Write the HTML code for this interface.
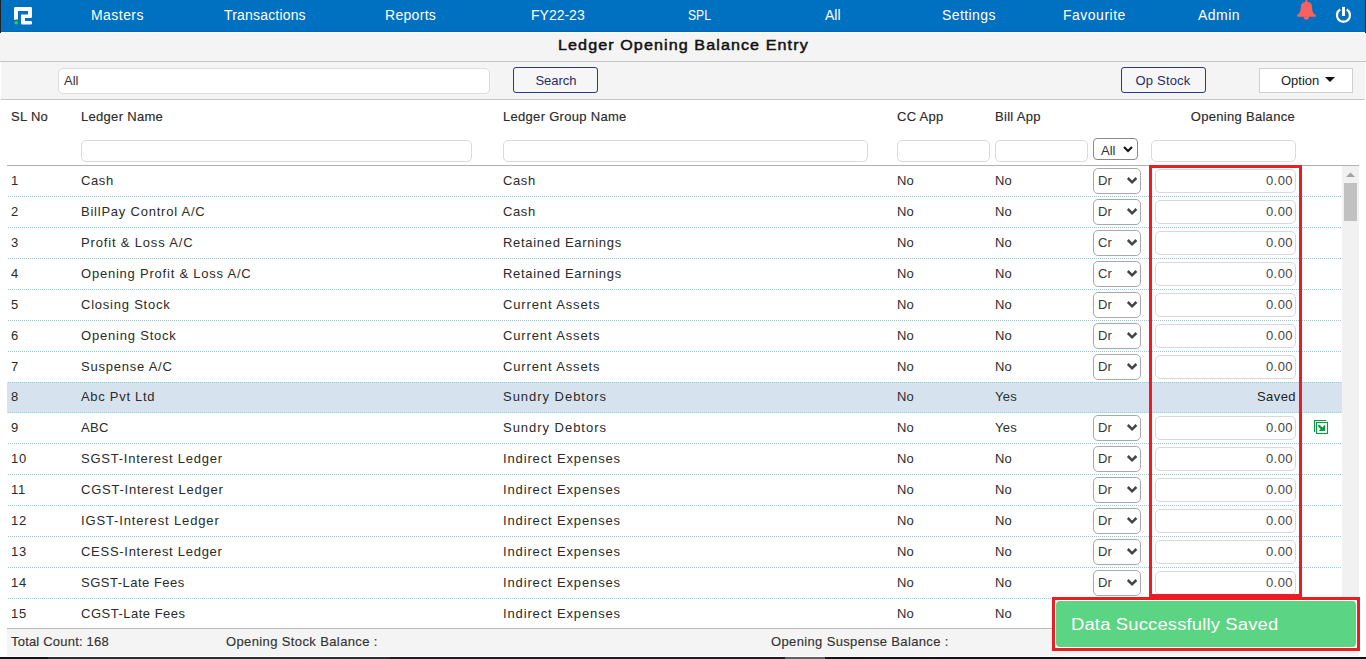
<!DOCTYPE html>
<html><head><meta charset="utf-8"><title>Ledger Opening Balance Entry</title>
<style>
html,body{margin:0;padding:0;}
body{width:1366px;height:659px;position:relative;overflow:hidden;background:#fff;font-family:'Liberation Sans', sans-serif;}
</style></head><body>
<div style="position:absolute;left:0px;top:0px;width:1366px;height:32px;background:#0070c0;"></div>
<div style="position:absolute;left:0px;top:31px;width:1366px;height:1px;background:#0068b8;"></div>
<div style="position:absolute;left:0px;top:0px;width:1px;height:33px;background:#222;"></div>
<div style="position:absolute;left:1365px;top:0px;width:1px;height:33px;background:#222;"></div>
<div style="position:absolute;left:1px;top:32px;width:1364px;height:1px;background:#fff;"></div>
<svg style="position:absolute;left:0;top:0" width="40" height="32" viewBox="0 0 40 32">
<path d="M15.2 7 H30.8 Q32 7 32 8.2 V16.8 Q32 18 30.8 18 H25 V21 H30.8 Q32 21 32 22.2 V23.3 Q32 24.5 30.8 24.5 H22.2 Q21 24.5 21 23.3 V14.6 H28 V11 H18 V19.8 L17 19.3 L16 19.8 L14 19.8 V8.2 Q14 7 15.2 7 Z" fill="#fff"/>
<circle cx="16.2" cy="22.7" r="1.75" fill="#3bd13b"/>
</svg>
<div style="position:absolute;left:91px;top:5px;font-size:14px;line-height:20px;color:#fff;white-space:nowrap;letter-spacing:0.45px;">Masters</div>
<div style="position:absolute;left:224px;top:5px;font-size:14px;line-height:20px;color:#fff;white-space:nowrap;letter-spacing:0.18px;">Transactions</div>
<div style="position:absolute;left:385px;top:5px;font-size:14px;line-height:20px;color:#fff;white-space:nowrap;letter-spacing:0.30px;">Reports</div>
<div style="position:absolute;left:531px;top:5px;font-size:14px;line-height:20px;color:#fff;white-space:nowrap;letter-spacing:0.00px;">FY22-23</div>
<div style="position:absolute;left:688px;top:5px;font-size:14px;line-height:20px;color:#fff;white-space:nowrap;letter-spacing:0.00px;transform:scaleX(0.87);transform-origin:0 0;">SPL</div>
<div style="position:absolute;left:825px;top:5px;font-size:14px;line-height:20px;color:#fff;white-space:nowrap;letter-spacing:0.00px;">All</div>
<div style="position:absolute;left:942px;top:5px;font-size:14px;line-height:20px;color:#fff;white-space:nowrap;letter-spacing:0.40px;">Settings</div>
<div style="position:absolute;left:1063px;top:5px;font-size:14px;line-height:20px;color:#fff;white-space:nowrap;letter-spacing:0.50px;">Favourite</div>
<div style="position:absolute;left:1198px;top:5px;font-size:14px;line-height:20px;color:#fff;white-space:nowrap;letter-spacing:0.45px;">Admin</div>
<svg style="position:absolute;left:1290px;top:0px" width="32" height="24" viewBox="0 0 32 24">
<rect x="15.5" y="0" width="1.9" height="3" fill="#f96060"/>
<path d="M16.4 1.9 C19.8 1.9 21.6 2.4 21.9 6 L22.4 10.8 C22.8 12.8 23.8 14 25.7 14.8 V16.75 H7.1 V14.8 C9 14 10 12.8 10.4 10.8 L10.9 7 C11.2 2.4 13 1.9 16.4 1.9 Z" fill="#f96060"/>
<path d="M13.6 16.5 H19.1 C19.1 18.6 17.9 19.85 16.35 19.85 C14.8 19.85 13.6 18.6 13.6 16.5 Z" fill="#f96060"/>
</svg>
<svg style="position:absolute;left:1330px;top:0px" width="28" height="28" viewBox="0 0 28 28">
<path d="M10.2 9.62 A6.5 6.5 0 1 0 16.7 9.62" fill="none" stroke="#fff" stroke-width="2.3"/>
<rect x="12" y="6.9" width="3" height="9.1" fill="#fff"/>
</svg>
<div style="position:absolute;left:0px;top:33px;width:1366px;height:28px;background:#f4f4f4;"></div>
<div style="position:absolute;left:0px;top:61px;width:1366px;height:1px;background:#c6c6c6;"></div>
<div style="position:absolute;left:558px;top:35px;font-size:14px;line-height:20px;color:#111;white-space:nowrap;font-weight:normal;-webkit-text-stroke:0.45px #111;letter-spacing:0.95px;transform:scaleX(1.15);transform-origin:0 0;">Ledger Opening Balance Entry</div>
<div style="position:absolute;left:1px;top:62px;width:1364px;height:37px;background:#f4f4f4;"></div>
<div style="position:absolute;left:1px;top:99px;width:1364px;height:1px;background:#c6c6c6;"></div>
<div style="position:absolute;left:58px;top:68px;width:432px;height:26px;box-sizing:border-box;background:#fff;border:1px solid #dcdcdc;border-radius:5px;"></div>
<div style="position:absolute;left:64px;top:71px;font-size:13px;line-height:20px;color:#333;white-space:nowrap;">All</div>
<div style="position:absolute;left:513px;top:67px;width:85px;height:26px;box-sizing:border-box;background:#f6f6f6;border:1px solid #263b80;border-radius:3px;"></div>
<div style="position:absolute;left:513px;width:86px;top:71px;font-size:13px;line-height:20px;color:#1f2c68;white-space:nowrap;text-align:center;">Search</div>
<div style="position:absolute;left:1121px;top:67px;width:85px;height:26px;box-sizing:border-box;background:#f6f6f6;border:1px solid #263b80;border-radius:3px;"></div>
<div style="position:absolute;left:1120px;width:86px;top:71px;font-size:13px;line-height:20px;color:#1f2c68;white-space:nowrap;text-align:center;letter-spacing:0.2px;">Op Stock</div>
<div style="position:absolute;left:1259px;top:68px;width:94px;height:25px;box-sizing:border-box;background:#fff;border:1px solid #cfcfcf;"></div>
<div style="position:absolute;left:1281px;top:71px;font-size:13px;line-height:20px;color:#222;white-space:nowrap;">Option</div>
<svg style="position:absolute;left:1325px;top:77px" width="10" height="5" viewBox="0 0 10 5"><path d="M0 0 H10 L5 5 Z" fill="#111"/></svg>
<div style="position:absolute;left:11px;top:107px;font-size:13px;line-height:20px;color:#2a2a2a;white-space:nowrap;letter-spacing:0.3px;-webkit-text-stroke:0.15px #2a2a2a;">SL No</div>
<div style="position:absolute;left:81px;top:107px;font-size:13px;line-height:20px;color:#2a2a2a;white-space:nowrap;letter-spacing:0.3px;-webkit-text-stroke:0.15px #2a2a2a;">Ledger Name</div>
<div style="position:absolute;left:503px;top:107px;font-size:13px;line-height:20px;color:#2a2a2a;white-space:nowrap;letter-spacing:0.3px;-webkit-text-stroke:0.15px #2a2a2a;">Ledger Group Name</div>
<div style="position:absolute;left:897px;top:107px;font-size:13px;line-height:20px;color:#2a2a2a;white-space:nowrap;letter-spacing:0.3px;-webkit-text-stroke:0.15px #2a2a2a;">CC App</div>
<div style="position:absolute;left:995px;top:107px;font-size:13px;line-height:20px;color:#2a2a2a;white-space:nowrap;letter-spacing:0.3px;-webkit-text-stroke:0.15px #2a2a2a;">Bill App</div>
<div style="position:absolute;right:71px;top:107px;font-size:13px;line-height:20px;color:#2a2a2a;white-space:nowrap;text-align:right;letter-spacing:0.3px;-webkit-text-stroke:0.15px #2a2a2a;">Opening Balance</div>
<div style="position:absolute;left:81px;top:140px;width:391px;height:22px;box-sizing:border-box;background:#fff;border:1px solid #dadada;border-radius:5px;"></div>
<div style="position:absolute;left:503px;top:140px;width:365px;height:22px;box-sizing:border-box;background:#fff;border:1px solid #dadada;border-radius:5px;"></div>
<div style="position:absolute;left:897px;top:140px;width:93px;height:22px;box-sizing:border-box;background:#fff;border:1px solid #dadada;border-radius:5px;"></div>
<div style="position:absolute;left:995px;top:140px;width:93px;height:22px;box-sizing:border-box;background:#fff;border:1px solid #dadada;border-radius:5px;"></div>
<div style="position:absolute;left:1151px;top:140px;width:145px;height:22px;box-sizing:border-box;background:#fff;border:1px solid #dadada;border-radius:5px;"></div>
<div style="position:absolute;left:1093px;top:138px;width:45px;height:22px;box-sizing:border-box;background:#fff;border:1px solid #8a8a8a;border-radius:4px;"></div>
<div style="position:absolute;left:1101px;top:141px;font-size:13px;line-height:20px;color:#333;white-space:nowrap;">All</div>
<svg style="position:absolute;left:1123px;top:146px" width="10" height="7" viewBox="0 0 10 7"><path d="M1 1 L5 5 L9 1" fill="none" stroke="#111" stroke-width="2"/></svg>
<div style="position:absolute;left:7px;top:165px;width:1352px;height:1px;background:#b0b0b0;"></div>
<div style="position:absolute;left:7px;top:382px;width:1335px;height:31px;background:#d6e3ef;"></div>
<div style="position:absolute;left:11px;top:171px;font-size:13px;line-height:20px;color:#2a2a2a;white-space:nowrap;letter-spacing:0.75px;">1</div>
<div style="position:absolute;left:81px;top:171px;font-size:13px;line-height:20px;color:#2a2a2a;white-space:nowrap;letter-spacing:0.62px;">Cash</div>
<div style="position:absolute;left:503px;top:171px;font-size:13px;line-height:20px;color:#2a2a2a;white-space:nowrap;letter-spacing:0.62px;">Cash</div>
<div style="position:absolute;left:897px;top:171px;font-size:13px;line-height:20px;color:#2e2e2e;white-space:nowrap;letter-spacing:0.00px;">No</div>
<div style="position:absolute;left:995px;top:171px;font-size:13px;line-height:20px;color:#2e2e2e;white-space:nowrap;letter-spacing:0.00px;">No</div>
<div style="position:absolute;left:1093px;top:168px;width:48px;height:26px;box-sizing:border-box;background:#fff;border:1px solid #a8a8a8;border-radius:5px;"></div>
<div style="position:absolute;left:1098px;top:171px;font-size:13px;line-height:20px;color:#383838;white-space:nowrap;">Dr</div>
<svg style="position:absolute;left:1126px;top:176px" width="12" height="9" viewBox="0 0 12 9"><path d="M1.8 2 L6.1 6.3 L10.4 2" fill="none" stroke="#444" stroke-width="2.5"/></svg>
<div style="position:absolute;left:1155px;top:169px;width:141px;height:24px;box-sizing:border-box;background:#fff;border:1px solid #d8d8d8;border-radius:5px;"></div>
<div style="position:absolute;right:73px;top:171px;font-size:13px;line-height:20px;color:#444;white-space:nowrap;text-align:right;letter-spacing:0.45px;">0.00</div>
<div style="position:absolute;left:7px;top:196px;width:1335px;height:1px;background-image:linear-gradient(to right,#9ccad6 50%,transparent 50%);background-size:2px 1px;background-position:1px 0;"></div>
<div style="position:absolute;left:11px;top:202px;font-size:13px;line-height:20px;color:#2a2a2a;white-space:nowrap;letter-spacing:0.75px;">2</div>
<div style="position:absolute;left:81px;top:202px;font-size:13px;line-height:20px;color:#2a2a2a;white-space:nowrap;letter-spacing:0.77px;">BillPay Control A/C</div>
<div style="position:absolute;left:503px;top:202px;font-size:13px;line-height:20px;color:#2a2a2a;white-space:nowrap;letter-spacing:0.62px;">Cash</div>
<div style="position:absolute;left:897px;top:202px;font-size:13px;line-height:20px;color:#2e2e2e;white-space:nowrap;letter-spacing:0.00px;">No</div>
<div style="position:absolute;left:995px;top:202px;font-size:13px;line-height:20px;color:#2e2e2e;white-space:nowrap;letter-spacing:0.00px;">No</div>
<div style="position:absolute;left:1093px;top:199px;width:48px;height:26px;box-sizing:border-box;background:#fff;border:1px solid #a8a8a8;border-radius:5px;"></div>
<div style="position:absolute;left:1098px;top:202px;font-size:13px;line-height:20px;color:#383838;white-space:nowrap;">Dr</div>
<svg style="position:absolute;left:1126px;top:207px" width="12" height="9" viewBox="0 0 12 9"><path d="M1.8 2 L6.1 6.3 L10.4 2" fill="none" stroke="#444" stroke-width="2.5"/></svg>
<div style="position:absolute;left:1155px;top:200px;width:141px;height:24px;box-sizing:border-box;background:#fff;border:1px solid #d8d8d8;border-radius:5px;"></div>
<div style="position:absolute;right:73px;top:202px;font-size:13px;line-height:20px;color:#444;white-space:nowrap;text-align:right;letter-spacing:0.45px;">0.00</div>
<div style="position:absolute;left:7px;top:227px;width:1335px;height:1px;background-image:linear-gradient(to right,#9ccad6 50%,transparent 50%);background-size:2px 1px;background-position:1px 0;"></div>
<div style="position:absolute;left:11px;top:233px;font-size:13px;line-height:20px;color:#2a2a2a;white-space:nowrap;letter-spacing:0.75px;">3</div>
<div style="position:absolute;left:81px;top:233px;font-size:13px;line-height:20px;color:#2a2a2a;white-space:nowrap;letter-spacing:0.83px;">Profit &amp; Loss A/C</div>
<div style="position:absolute;left:503px;top:233px;font-size:13px;line-height:20px;color:#2a2a2a;white-space:nowrap;letter-spacing:0.70px;">Retained Earnings</div>
<div style="position:absolute;left:897px;top:233px;font-size:13px;line-height:20px;color:#2e2e2e;white-space:nowrap;letter-spacing:0.00px;">No</div>
<div style="position:absolute;left:995px;top:233px;font-size:13px;line-height:20px;color:#2e2e2e;white-space:nowrap;letter-spacing:0.00px;">No</div>
<div style="position:absolute;left:1093px;top:230px;width:48px;height:26px;box-sizing:border-box;background:#fff;border:1px solid #a8a8a8;border-radius:5px;"></div>
<div style="position:absolute;left:1098px;top:233px;font-size:13px;line-height:20px;color:#383838;white-space:nowrap;">Cr</div>
<svg style="position:absolute;left:1126px;top:238px" width="12" height="9" viewBox="0 0 12 9"><path d="M1.8 2 L6.1 6.3 L10.4 2" fill="none" stroke="#444" stroke-width="2.5"/></svg>
<div style="position:absolute;left:1155px;top:231px;width:141px;height:24px;box-sizing:border-box;background:#fff;border:1px solid #d8d8d8;border-radius:5px;"></div>
<div style="position:absolute;right:73px;top:233px;font-size:13px;line-height:20px;color:#444;white-space:nowrap;text-align:right;letter-spacing:0.45px;">0.00</div>
<div style="position:absolute;left:7px;top:258px;width:1335px;height:1px;background-image:linear-gradient(to right,#9ccad6 50%,transparent 50%);background-size:2px 1px;background-position:1px 0;"></div>
<div style="position:absolute;left:11px;top:264px;font-size:13px;line-height:20px;color:#2a2a2a;white-space:nowrap;letter-spacing:0.75px;">4</div>
<div style="position:absolute;left:81px;top:264px;font-size:13px;line-height:20px;color:#2a2a2a;white-space:nowrap;letter-spacing:0.78px;">Opening Profit &amp; Loss A/C</div>
<div style="position:absolute;left:503px;top:264px;font-size:13px;line-height:20px;color:#2a2a2a;white-space:nowrap;letter-spacing:0.70px;">Retained Earnings</div>
<div style="position:absolute;left:897px;top:264px;font-size:13px;line-height:20px;color:#2e2e2e;white-space:nowrap;letter-spacing:0.00px;">No</div>
<div style="position:absolute;left:995px;top:264px;font-size:13px;line-height:20px;color:#2e2e2e;white-space:nowrap;letter-spacing:0.00px;">No</div>
<div style="position:absolute;left:1093px;top:261px;width:48px;height:26px;box-sizing:border-box;background:#fff;border:1px solid #a8a8a8;border-radius:5px;"></div>
<div style="position:absolute;left:1098px;top:264px;font-size:13px;line-height:20px;color:#383838;white-space:nowrap;">Cr</div>
<svg style="position:absolute;left:1126px;top:269px" width="12" height="9" viewBox="0 0 12 9"><path d="M1.8 2 L6.1 6.3 L10.4 2" fill="none" stroke="#444" stroke-width="2.5"/></svg>
<div style="position:absolute;left:1155px;top:262px;width:141px;height:24px;box-sizing:border-box;background:#fff;border:1px solid #d8d8d8;border-radius:5px;"></div>
<div style="position:absolute;right:73px;top:264px;font-size:13px;line-height:20px;color:#444;white-space:nowrap;text-align:right;letter-spacing:0.45px;">0.00</div>
<div style="position:absolute;left:7px;top:289px;width:1335px;height:1px;background-image:linear-gradient(to right,#9ccad6 50%,transparent 50%);background-size:2px 1px;background-position:1px 0;"></div>
<div style="position:absolute;left:11px;top:295px;font-size:13px;line-height:20px;color:#2a2a2a;white-space:nowrap;letter-spacing:0.75px;">5</div>
<div style="position:absolute;left:81px;top:295px;font-size:13px;line-height:20px;color:#2a2a2a;white-space:nowrap;letter-spacing:0.77px;">Closing Stock</div>
<div style="position:absolute;left:503px;top:295px;font-size:13px;line-height:20px;color:#2a2a2a;white-space:nowrap;letter-spacing:0.87px;">Current Assets</div>
<div style="position:absolute;left:897px;top:295px;font-size:13px;line-height:20px;color:#2e2e2e;white-space:nowrap;letter-spacing:0.00px;">No</div>
<div style="position:absolute;left:995px;top:295px;font-size:13px;line-height:20px;color:#2e2e2e;white-space:nowrap;letter-spacing:0.00px;">No</div>
<div style="position:absolute;left:1093px;top:292px;width:48px;height:26px;box-sizing:border-box;background:#fff;border:1px solid #a8a8a8;border-radius:5px;"></div>
<div style="position:absolute;left:1098px;top:295px;font-size:13px;line-height:20px;color:#383838;white-space:nowrap;">Dr</div>
<svg style="position:absolute;left:1126px;top:300px" width="12" height="9" viewBox="0 0 12 9"><path d="M1.8 2 L6.1 6.3 L10.4 2" fill="none" stroke="#444" stroke-width="2.5"/></svg>
<div style="position:absolute;left:1155px;top:293px;width:141px;height:24px;box-sizing:border-box;background:#fff;border:1px solid #d8d8d8;border-radius:5px;"></div>
<div style="position:absolute;right:73px;top:295px;font-size:13px;line-height:20px;color:#444;white-space:nowrap;text-align:right;letter-spacing:0.45px;">0.00</div>
<div style="position:absolute;left:7px;top:320px;width:1335px;height:1px;background-image:linear-gradient(to right,#9ccad6 50%,transparent 50%);background-size:2px 1px;background-position:1px 0;"></div>
<div style="position:absolute;left:11px;top:326px;font-size:13px;line-height:20px;color:#2a2a2a;white-space:nowrap;letter-spacing:0.75px;">6</div>
<div style="position:absolute;left:81px;top:326px;font-size:13px;line-height:20px;color:#2a2a2a;white-space:nowrap;letter-spacing:0.80px;">Opening Stock</div>
<div style="position:absolute;left:503px;top:326px;font-size:13px;line-height:20px;color:#2a2a2a;white-space:nowrap;letter-spacing:0.87px;">Current Assets</div>
<div style="position:absolute;left:897px;top:326px;font-size:13px;line-height:20px;color:#2e2e2e;white-space:nowrap;letter-spacing:0.00px;">No</div>
<div style="position:absolute;left:995px;top:326px;font-size:13px;line-height:20px;color:#2e2e2e;white-space:nowrap;letter-spacing:0.00px;">No</div>
<div style="position:absolute;left:1093px;top:323px;width:48px;height:26px;box-sizing:border-box;background:#fff;border:1px solid #a8a8a8;border-radius:5px;"></div>
<div style="position:absolute;left:1098px;top:326px;font-size:13px;line-height:20px;color:#383838;white-space:nowrap;">Dr</div>
<svg style="position:absolute;left:1126px;top:331px" width="12" height="9" viewBox="0 0 12 9"><path d="M1.8 2 L6.1 6.3 L10.4 2" fill="none" stroke="#444" stroke-width="2.5"/></svg>
<div style="position:absolute;left:1155px;top:324px;width:141px;height:24px;box-sizing:border-box;background:#fff;border:1px solid #d8d8d8;border-radius:5px;"></div>
<div style="position:absolute;right:73px;top:326px;font-size:13px;line-height:20px;color:#444;white-space:nowrap;text-align:right;letter-spacing:0.45px;">0.00</div>
<div style="position:absolute;left:7px;top:351px;width:1335px;height:1px;background-image:linear-gradient(to right,#9ccad6 50%,transparent 50%);background-size:2px 1px;background-position:1px 0;"></div>
<div style="position:absolute;left:11px;top:357px;font-size:13px;line-height:20px;color:#2a2a2a;white-space:nowrap;letter-spacing:0.75px;">7</div>
<div style="position:absolute;left:81px;top:357px;font-size:13px;line-height:20px;color:#2a2a2a;white-space:nowrap;letter-spacing:0.77px;">Suspense A/C</div>
<div style="position:absolute;left:503px;top:357px;font-size:13px;line-height:20px;color:#2a2a2a;white-space:nowrap;letter-spacing:0.87px;">Current Assets</div>
<div style="position:absolute;left:897px;top:357px;font-size:13px;line-height:20px;color:#2e2e2e;white-space:nowrap;letter-spacing:0.00px;">No</div>
<div style="position:absolute;left:995px;top:357px;font-size:13px;line-height:20px;color:#2e2e2e;white-space:nowrap;letter-spacing:0.00px;">No</div>
<div style="position:absolute;left:1093px;top:354px;width:48px;height:26px;box-sizing:border-box;background:#fff;border:1px solid #a8a8a8;border-radius:5px;"></div>
<div style="position:absolute;left:1098px;top:357px;font-size:13px;line-height:20px;color:#383838;white-space:nowrap;">Dr</div>
<svg style="position:absolute;left:1126px;top:362px" width="12" height="9" viewBox="0 0 12 9"><path d="M1.8 2 L6.1 6.3 L10.4 2" fill="none" stroke="#444" stroke-width="2.5"/></svg>
<div style="position:absolute;left:1155px;top:355px;width:141px;height:24px;box-sizing:border-box;background:#fff;border:1px solid #d8d8d8;border-radius:5px;"></div>
<div style="position:absolute;right:73px;top:357px;font-size:13px;line-height:20px;color:#444;white-space:nowrap;text-align:right;letter-spacing:0.45px;">0.00</div>
<div style="position:absolute;left:7px;top:382px;width:1335px;height:1px;background-image:linear-gradient(to right,#9ccad6 50%,transparent 50%);background-size:2px 1px;background-position:1px 0;"></div>
<div style="position:absolute;left:11px;top:387px;font-size:13px;line-height:20px;color:#2a2a2a;white-space:nowrap;letter-spacing:0.75px;">8</div>
<div style="position:absolute;left:81px;top:387px;font-size:13px;line-height:20px;color:#2a2a2a;white-space:nowrap;letter-spacing:0.70px;">Abc Pvt Ltd</div>
<div style="position:absolute;left:503px;top:387px;font-size:13px;line-height:20px;color:#2a2a2a;white-space:nowrap;letter-spacing:0.97px;">Sundry Debtors</div>
<div style="position:absolute;left:897px;top:387px;font-size:13px;line-height:20px;color:#2e2e2e;white-space:nowrap;letter-spacing:0.00px;">No</div>
<div style="position:absolute;left:995px;top:387px;font-size:13px;line-height:20px;color:#2e2e2e;white-space:nowrap;letter-spacing:0.30px;">Yes</div>
<div style="position:absolute;right:70px;top:387px;font-size:13px;line-height:20px;color:#222;white-space:nowrap;text-align:right;letter-spacing:0.45px;">Saved</div>
<div style="position:absolute;left:7px;top:412px;width:1335px;height:1px;background-image:linear-gradient(to right,#9ccad6 50%,transparent 50%);background-size:2px 1px;background-position:1px 0;"></div>
<div style="position:absolute;left:11px;top:418px;font-size:13px;line-height:20px;color:#2a2a2a;white-space:nowrap;letter-spacing:0.75px;">9</div>
<div style="position:absolute;left:81px;top:418px;font-size:13px;line-height:20px;color:#2a2a2a;white-space:nowrap;letter-spacing:0.35px;">ABC</div>
<div style="position:absolute;left:503px;top:418px;font-size:13px;line-height:20px;color:#2a2a2a;white-space:nowrap;letter-spacing:0.97px;">Sundry Debtors</div>
<div style="position:absolute;left:897px;top:418px;font-size:13px;line-height:20px;color:#2e2e2e;white-space:nowrap;letter-spacing:0.00px;">No</div>
<div style="position:absolute;left:995px;top:418px;font-size:13px;line-height:20px;color:#2e2e2e;white-space:nowrap;letter-spacing:0.30px;">Yes</div>
<div style="position:absolute;left:1093px;top:415px;width:48px;height:26px;box-sizing:border-box;background:#fff;border:1px solid #a8a8a8;border-radius:5px;"></div>
<div style="position:absolute;left:1098px;top:418px;font-size:13px;line-height:20px;color:#383838;white-space:nowrap;">Dr</div>
<svg style="position:absolute;left:1126px;top:423px" width="12" height="9" viewBox="0 0 12 9"><path d="M1.8 2 L6.1 6.3 L10.4 2" fill="none" stroke="#444" stroke-width="2.5"/></svg>
<div style="position:absolute;left:1155px;top:416px;width:141px;height:24px;box-sizing:border-box;background:#fff;border:1px solid #d8d8d8;border-radius:5px;"></div>
<div style="position:absolute;right:73px;top:418px;font-size:13px;line-height:20px;color:#444;white-space:nowrap;text-align:right;letter-spacing:0.45px;">0.00</div>
<div style="position:absolute;left:7px;top:443px;width:1335px;height:1px;background-image:linear-gradient(to right,#9ccad6 50%,transparent 50%);background-size:2px 1px;background-position:1px 0;"></div>
<div style="position:absolute;left:11px;top:449px;font-size:13px;line-height:20px;color:#2a2a2a;white-space:nowrap;letter-spacing:0.75px;">10</div>
<div style="position:absolute;left:81px;top:449px;font-size:13px;line-height:20px;color:#2a2a2a;white-space:nowrap;letter-spacing:0.77px;">SGST-Interest Ledger</div>
<div style="position:absolute;left:503px;top:449px;font-size:13px;line-height:20px;color:#2a2a2a;white-space:nowrap;letter-spacing:0.86px;">Indirect Expenses</div>
<div style="position:absolute;left:897px;top:449px;font-size:13px;line-height:20px;color:#2e2e2e;white-space:nowrap;letter-spacing:0.00px;">No</div>
<div style="position:absolute;left:995px;top:449px;font-size:13px;line-height:20px;color:#2e2e2e;white-space:nowrap;letter-spacing:0.00px;">No</div>
<div style="position:absolute;left:1093px;top:446px;width:48px;height:26px;box-sizing:border-box;background:#fff;border:1px solid #a8a8a8;border-radius:5px;"></div>
<div style="position:absolute;left:1098px;top:449px;font-size:13px;line-height:20px;color:#383838;white-space:nowrap;">Dr</div>
<svg style="position:absolute;left:1126px;top:454px" width="12" height="9" viewBox="0 0 12 9"><path d="M1.8 2 L6.1 6.3 L10.4 2" fill="none" stroke="#444" stroke-width="2.5"/></svg>
<div style="position:absolute;left:1155px;top:447px;width:141px;height:24px;box-sizing:border-box;background:#fff;border:1px solid #d8d8d8;border-radius:5px;"></div>
<div style="position:absolute;right:73px;top:449px;font-size:13px;line-height:20px;color:#444;white-space:nowrap;text-align:right;letter-spacing:0.45px;">0.00</div>
<div style="position:absolute;left:7px;top:474px;width:1335px;height:1px;background-image:linear-gradient(to right,#9ccad6 50%,transparent 50%);background-size:2px 1px;background-position:1px 0;"></div>
<div style="position:absolute;left:11px;top:480px;font-size:13px;line-height:20px;color:#2a2a2a;white-space:nowrap;letter-spacing:0.75px;">11</div>
<div style="position:absolute;left:81px;top:480px;font-size:13px;line-height:20px;color:#2a2a2a;white-space:nowrap;letter-spacing:0.77px;">CGST-Interest Ledger</div>
<div style="position:absolute;left:503px;top:480px;font-size:13px;line-height:20px;color:#2a2a2a;white-space:nowrap;letter-spacing:0.86px;">Indirect Expenses</div>
<div style="position:absolute;left:897px;top:480px;font-size:13px;line-height:20px;color:#2e2e2e;white-space:nowrap;letter-spacing:0.00px;">No</div>
<div style="position:absolute;left:995px;top:480px;font-size:13px;line-height:20px;color:#2e2e2e;white-space:nowrap;letter-spacing:0.00px;">No</div>
<div style="position:absolute;left:1093px;top:477px;width:48px;height:26px;box-sizing:border-box;background:#fff;border:1px solid #a8a8a8;border-radius:5px;"></div>
<div style="position:absolute;left:1098px;top:480px;font-size:13px;line-height:20px;color:#383838;white-space:nowrap;">Dr</div>
<svg style="position:absolute;left:1126px;top:485px" width="12" height="9" viewBox="0 0 12 9"><path d="M1.8 2 L6.1 6.3 L10.4 2" fill="none" stroke="#444" stroke-width="2.5"/></svg>
<div style="position:absolute;left:1155px;top:478px;width:141px;height:24px;box-sizing:border-box;background:#fff;border:1px solid #d8d8d8;border-radius:5px;"></div>
<div style="position:absolute;right:73px;top:480px;font-size:13px;line-height:20px;color:#444;white-space:nowrap;text-align:right;letter-spacing:0.45px;">0.00</div>
<div style="position:absolute;left:7px;top:505px;width:1335px;height:1px;background-image:linear-gradient(to right,#9ccad6 50%,transparent 50%);background-size:2px 1px;background-position:1px 0;"></div>
<div style="position:absolute;left:11px;top:511px;font-size:13px;line-height:20px;color:#2a2a2a;white-space:nowrap;letter-spacing:0.75px;">12</div>
<div style="position:absolute;left:81px;top:511px;font-size:13px;line-height:20px;color:#2a2a2a;white-space:nowrap;letter-spacing:0.86px;">IGST-Interest Ledger</div>
<div style="position:absolute;left:503px;top:511px;font-size:13px;line-height:20px;color:#2a2a2a;white-space:nowrap;letter-spacing:0.86px;">Indirect Expenses</div>
<div style="position:absolute;left:897px;top:511px;font-size:13px;line-height:20px;color:#2e2e2e;white-space:nowrap;letter-spacing:0.00px;">No</div>
<div style="position:absolute;left:995px;top:511px;font-size:13px;line-height:20px;color:#2e2e2e;white-space:nowrap;letter-spacing:0.00px;">No</div>
<div style="position:absolute;left:1093px;top:508px;width:48px;height:26px;box-sizing:border-box;background:#fff;border:1px solid #a8a8a8;border-radius:5px;"></div>
<div style="position:absolute;left:1098px;top:511px;font-size:13px;line-height:20px;color:#383838;white-space:nowrap;">Dr</div>
<svg style="position:absolute;left:1126px;top:516px" width="12" height="9" viewBox="0 0 12 9"><path d="M1.8 2 L6.1 6.3 L10.4 2" fill="none" stroke="#444" stroke-width="2.5"/></svg>
<div style="position:absolute;left:1155px;top:509px;width:141px;height:24px;box-sizing:border-box;background:#fff;border:1px solid #d8d8d8;border-radius:5px;"></div>
<div style="position:absolute;right:73px;top:511px;font-size:13px;line-height:20px;color:#444;white-space:nowrap;text-align:right;letter-spacing:0.45px;">0.00</div>
<div style="position:absolute;left:7px;top:536px;width:1335px;height:1px;background-image:linear-gradient(to right,#9ccad6 50%,transparent 50%);background-size:2px 1px;background-position:1px 0;"></div>
<div style="position:absolute;left:11px;top:542px;font-size:13px;line-height:20px;color:#2a2a2a;white-space:nowrap;letter-spacing:0.75px;">13</div>
<div style="position:absolute;left:81px;top:542px;font-size:13px;line-height:20px;color:#2a2a2a;white-space:nowrap;letter-spacing:0.72px;">CESS-Interest Ledger</div>
<div style="position:absolute;left:503px;top:542px;font-size:13px;line-height:20px;color:#2a2a2a;white-space:nowrap;letter-spacing:0.86px;">Indirect Expenses</div>
<div style="position:absolute;left:897px;top:542px;font-size:13px;line-height:20px;color:#2e2e2e;white-space:nowrap;letter-spacing:0.00px;">No</div>
<div style="position:absolute;left:995px;top:542px;font-size:13px;line-height:20px;color:#2e2e2e;white-space:nowrap;letter-spacing:0.00px;">No</div>
<div style="position:absolute;left:1093px;top:539px;width:48px;height:26px;box-sizing:border-box;background:#fff;border:1px solid #a8a8a8;border-radius:5px;"></div>
<div style="position:absolute;left:1098px;top:542px;font-size:13px;line-height:20px;color:#383838;white-space:nowrap;">Dr</div>
<svg style="position:absolute;left:1126px;top:547px" width="12" height="9" viewBox="0 0 12 9"><path d="M1.8 2 L6.1 6.3 L10.4 2" fill="none" stroke="#444" stroke-width="2.5"/></svg>
<div style="position:absolute;left:1155px;top:540px;width:141px;height:24px;box-sizing:border-box;background:#fff;border:1px solid #d8d8d8;border-radius:5px;"></div>
<div style="position:absolute;right:73px;top:542px;font-size:13px;line-height:20px;color:#444;white-space:nowrap;text-align:right;letter-spacing:0.45px;">0.00</div>
<div style="position:absolute;left:7px;top:567px;width:1335px;height:1px;background-image:linear-gradient(to right,#9ccad6 50%,transparent 50%);background-size:2px 1px;background-position:1px 0;"></div>
<div style="position:absolute;left:11px;top:573px;font-size:13px;line-height:20px;color:#2a2a2a;white-space:nowrap;letter-spacing:0.75px;">14</div>
<div style="position:absolute;left:81px;top:573px;font-size:13px;line-height:20px;color:#2a2a2a;white-space:nowrap;letter-spacing:0.50px;">SGST-Late Fees</div>
<div style="position:absolute;left:503px;top:573px;font-size:13px;line-height:20px;color:#2a2a2a;white-space:nowrap;letter-spacing:0.86px;">Indirect Expenses</div>
<div style="position:absolute;left:897px;top:573px;font-size:13px;line-height:20px;color:#2e2e2e;white-space:nowrap;letter-spacing:0.00px;">No</div>
<div style="position:absolute;left:995px;top:573px;font-size:13px;line-height:20px;color:#2e2e2e;white-space:nowrap;letter-spacing:0.00px;">No</div>
<div style="position:absolute;left:1093px;top:570px;width:48px;height:26px;box-sizing:border-box;background:#fff;border:1px solid #a8a8a8;border-radius:5px;"></div>
<div style="position:absolute;left:1098px;top:573px;font-size:13px;line-height:20px;color:#383838;white-space:nowrap;">Dr</div>
<svg style="position:absolute;left:1126px;top:578px" width="12" height="9" viewBox="0 0 12 9"><path d="M1.8 2 L6.1 6.3 L10.4 2" fill="none" stroke="#444" stroke-width="2.5"/></svg>
<div style="position:absolute;left:1155px;top:571px;width:141px;height:24px;box-sizing:border-box;background:#fff;border:1px solid #d8d8d8;border-radius:5px;"></div>
<div style="position:absolute;right:73px;top:573px;font-size:13px;line-height:20px;color:#444;white-space:nowrap;text-align:right;letter-spacing:0.45px;">0.00</div>
<div style="position:absolute;left:7px;top:598px;width:1335px;height:1px;background-image:linear-gradient(to right,#9ccad6 50%,transparent 50%);background-size:2px 1px;background-position:1px 0;"></div>
<div style="position:absolute;left:11px;top:604px;font-size:13px;line-height:20px;color:#2a2a2a;white-space:nowrap;letter-spacing:0.75px;">15</div>
<div style="position:absolute;left:81px;top:604px;font-size:13px;line-height:20px;color:#2a2a2a;white-space:nowrap;letter-spacing:0.50px;">CGST-Late Fees</div>
<div style="position:absolute;left:503px;top:604px;font-size:13px;line-height:20px;color:#2a2a2a;white-space:nowrap;letter-spacing:0.86px;">Indirect Expenses</div>
<div style="position:absolute;left:897px;top:604px;font-size:13px;line-height:20px;color:#2e2e2e;white-space:nowrap;letter-spacing:0.00px;">No</div>
<div style="position:absolute;left:995px;top:604px;font-size:13px;line-height:20px;color:#2e2e2e;white-space:nowrap;letter-spacing:0.00px;">No</div>
<div style="position:absolute;left:1093px;top:601px;width:48px;height:26px;box-sizing:border-box;background:#fff;border:1px solid #a8a8a8;border-radius:5px;"></div>
<div style="position:absolute;left:1098px;top:604px;font-size:13px;line-height:20px;color:#383838;white-space:nowrap;">Dr</div>
<svg style="position:absolute;left:1126px;top:609px" width="12" height="9" viewBox="0 0 12 9"><path d="M1.8 2 L6.1 6.3 L10.4 2" fill="none" stroke="#444" stroke-width="2.5"/></svg>
<div style="position:absolute;left:1155px;top:602px;width:141px;height:24px;box-sizing:border-box;background:#fff;border:1px solid #d8d8d8;border-radius:5px;"></div>
<div style="position:absolute;right:73px;top:604px;font-size:13px;line-height:20px;color:#444;white-space:nowrap;text-align:right;letter-spacing:0.45px;">0.00</div>
<svg style="position:absolute;left:1300px;top:413px" width="40" height="30" viewBox="0 0 40 30">
<path d="M14.5 19 V7.5 H26.2" fill="none" stroke="#0a9a3f" stroke-width="1.1"/>
<rect x="16.5" y="9.5" width="11" height="11" fill="none" stroke="#0a9a3f" stroke-width="1.1"/>
<path d="M25.2 11.6 V17.9 H18.9 Z" fill="#0a9a3f"/>
<path d="M18.4 12.2 L22.6 16.4" stroke="#0a9a3f" stroke-width="2.2"/>
</svg>
<div style="position:absolute;left:1342px;top:166px;width:17px;height:431px;background:#f1f1f1;"></div>
<div style="position:absolute;left:1344px;top:183px;width:13px;height:38px;background:#c1c1c1;"></div>
<svg style="position:absolute;left:1346px;top:172px" width="9" height="6" viewBox="0 0 9 6"><path d="M0 5 L4.5 0.5 L9 5 Z" fill="#a3a3a3"/></svg>
<div style="position:absolute;left:7px;top:628px;width:1352px;height:1px;background:#b9b9b9;"></div>
<div style="position:absolute;left:7px;top:629px;width:1352px;height:27px;background:#f4f4f4;"></div>
<div style="position:absolute;left:11px;top:632px;font-size:13px;line-height:20px;color:#333;white-space:nowrap;letter-spacing:0.2px;-webkit-text-stroke:0.15px #333;">Total Count: 168</div>
<div style="position:absolute;left:226px;top:632px;font-size:13px;line-height:20px;color:#333;white-space:nowrap;letter-spacing:0.38px;-webkit-text-stroke:0.15px #333;">Opening Stock Balance :</div>
<div style="position:absolute;left:771px;top:632px;font-size:13px;line-height:20px;color:#333;white-space:nowrap;letter-spacing:0.36px;-webkit-text-stroke:0.15px #333;">Opening Suspense Balance :</div>
<div style="position:absolute;left:0px;top:657px;width:1366px;height:2px;background:#151115;"></div>
<div style="position:absolute;left:48px;top:657px;width:342px;height:2px;background:#2e2e2e;"></div>
<div style="position:absolute;left:390px;top:657px;width:395px;height:2px;background:#2a181d;"></div>
<div style="position:absolute;left:785px;top:657px;width:40px;height:2px;background:#6a5d60;"></div>
<div style="position:absolute;left:1149px;top:165px;width:153px;height:432px;box-sizing:border-box;border:3px solid #ec1c24;"></div>
<div style="position:absolute;left:1052px;top:597px;width:308px;height:54px;box-sizing:border-box;border:3px solid #ec1c24;background:#fff;"></div>
<div style="position:absolute;left:1056px;top:601px;width:300px;height:46px;background:#5bd583;border-radius:4px;"></div>
<div style="position:absolute;left:1071px;top:615px;font-size:16px;line-height:20px;color:#fff;white-space:nowrap;letter-spacing:0.145px;transform:scaleX(1.15);transform-origin:0 0;">Data Successfully Saved</div>
</body></html>
